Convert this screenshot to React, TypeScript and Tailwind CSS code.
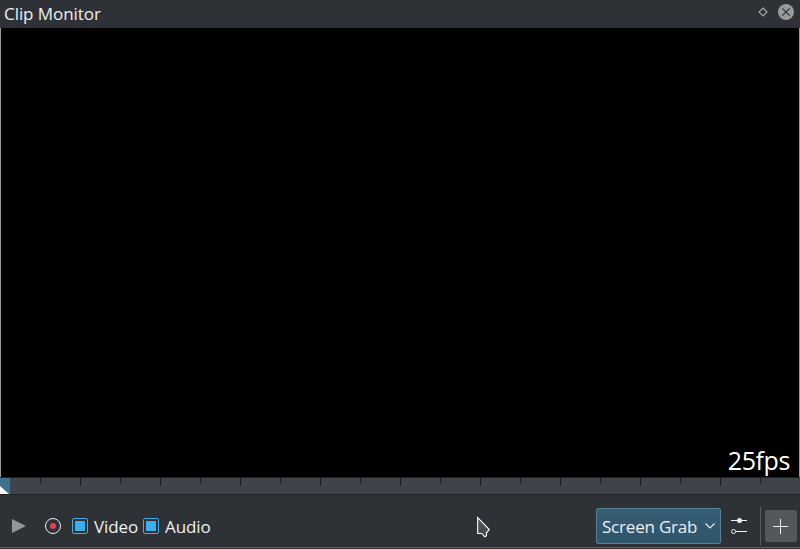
import React from "react";

const ticks = Array.from({ length: 19 }, (_, i) => i + 1);

function Check({ label }: { label: string }) {
  return (
    <label className="flex h-[22px] items-center gap-[6px]">
      <span className="flex h-4 w-4 items-center justify-center rounded-[2px] border border-[#3daee9]">
        <span className="h-[10px] w-[10px] bg-[#3daee9]" />
      </span>
      <span className="relative top-px w-[43px] whitespace-nowrap leading-[22px]">{label}</span>
    </label>
  );
}

function Header() {
  return (
    <header className="flex h-7 items-center justify-between bg-[#2e3136] pl-1 pr-[5px]">
      <h1 className="leading-[28px] tracking-[-0.06px]">Clip Monitor</h1>
      <div className="relative -top-[2px] flex h-6 items-center gap-[8px]">
        <svg width="12" height="12" viewBox="0 0 12 12" fill="none" stroke="#a2a4a7" strokeWidth="1.2">
          <path d="M6 2 10 6 6 10 2 6Z" />
        </svg>
        <svg width="18" height="18" viewBox="0 0 18 18">
          <circle cx="9" cy="9" r="8" fill="#97999b" />
          <path d="m5.3 5.3 7.4 7.4m0-7.4-7.4 7.4" stroke="#2e3136" strokeWidth="1.2" />
        </svg>
      </div>
    </header>
  );
}

function Ruler() {
  return (
    <div className="h-[18px] w-full">
      <svg className="block" width="800" height="18" viewBox="0 0 800 18" shapeRendering="crispEdges">
        <rect width="800" height="18" fill="#3f434a" />
        <rect width="800" height="1" fill="#202326" />
        <rect y="17" width="800" height="1" fill="#202326" />
        {ticks.map((t) => (
          <rect key={t} x={t * 40} y="1" width="1" height={t % 2 ? 5 : 8} fill="#1b1e20" />
        ))}
        <rect y="1" width="10" height="16" fill="#3d708f" />
        <path d="M0 9v8h9Z" fill="#fcfcfc" shapeRendering="auto" />
      </svg>
    </div>
  );
}

export default function App() {
  return (
    <main className="relative flex h-[549px] w-[800px] flex-col overflow-hidden bg-[#2e3136] font-['Open_Sans','Noto_Sans',sans-serif] text-[17px] tracking-[-0.12px] text-[#eff0f1]">
      <Header />
      <section className="flex h-[449px] items-end justify-end border-x border-[#96989a] bg-black pr-[9px]">
        <span className="text-[25px] leading-[33px] tracking-[-0.4px] text-white">25fps</span>
      </section>
      <Ruler />
      <footer className="flex h-[54px] items-center pb-[1px] pt-[9px]">
        <button className="flex h-8 w-[43px] items-center pl-[11px]">
          <svg width="16" height="16" viewBox="0 0 16 16">
            <path d="M1 1 15 8 1 15Z" fill="#939597" />
          </svg>
        </button>
        <button className="mr-[11px] flex h-8 w-[18px] items-center justify-center">
          <svg width="18" height="18" viewBox="0 0 18 18">
            <circle cx="10" cy="9" r="7.5" fill="none" stroke="#eff0f1" />
            <circle cx="10" cy="9" r="3" fill="#da4453" />
          </svg>
        </button>
        <div className="flex gap-[6px]">
          <Check label="Video" />
          <Check label="Audio" />
        </div>
        <div className="ml-auto flex items-center pr-[3px]">
          <button className="flex h-9 w-[125px] items-center justify-between rounded-[2px] border border-[#568197] bg-linear-to-b from-[#355d74] to-[#2f556b] pl-[5px] pr-[4px]">
            <span className="relative top-px tracking-[-0.2px]">Screen Grab</span>
            <svg width="12" height="10" viewBox="0 0 12 10" fill="none" stroke="#eff0f1" strokeWidth="1.1">
              <path d="m1.5 2.5 4.5 4.5 4.5-4.5" />
            </svg>
          </button>
          <button className="ml-[9px] flex h-9 w-[18px] items-center">
            <svg width="18" height="18" viewBox="0 0 18 18" fill="none" stroke="#eff0f1">
              <path d="M1 3.5h16M6 14.5h11" />
              <circle cx="9.5" cy="3.5" r="2.5" fill="#eff0f1" stroke="none" />
              <circle cx="3.5" cy="14.5" r="2" />
            </svg>
          </button>
          <span className="ml-[12px] h-[38px] w-px bg-[#585b5f]" />
          <button className="ml-[4px] flex h-8 w-8 items-center justify-center rounded-[2px] bg-[#54575b]">
            <svg width="16" height="16" viewBox="0 0 16 16" stroke="#eff0f1">
              <path d="M0 8.5h15M7.5 1v15" />
            </svg>
          </button>
        </div>
      </footer>
      <svg className="absolute left-[477px] top-[516px]" width="14" height="22" viewBox="0 0 14 22">
        <path d="M.7 1.7V17.5h4l3 3.3 1.8-1v-3l2.8-3.3Z" fill="#4d4d4d" stroke="#fff" strokeWidth="1.1" />
      </svg>
      <div className="absolute bottom-[1px] left-0 h-px w-full bg-[#5c5f63]" />
    </main>
  );
}
